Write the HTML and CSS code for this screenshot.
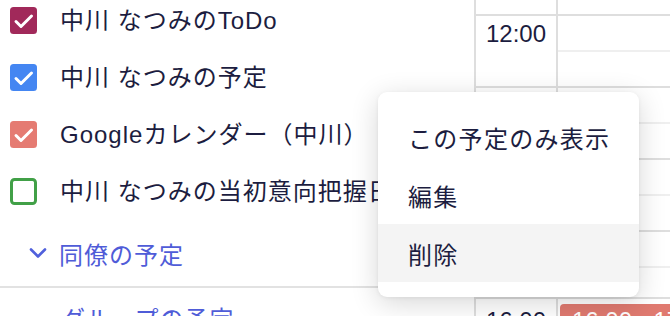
FILE: index.html
```html
<!DOCTYPE html>
<html lang="ja">
<head>
<meta charset="utf-8">
<title>カレンダー</title>
<link rel="stylesheet" href="styles.css">
</head>
<body>
<div class="app">
  <aside class="sidebar">
    <ul class="cal-list">
      <li class="cal-item">
        <span class="cb cb-todo"><svg viewBox="0 0 27 27" width="27" height="27"><rect x="0" y="0" width="27" height="27" rx="3.5" fill="#a1295a"/><polyline points="6,14.5 11,19.5 21.5,9" fill="none" stroke="#fff" stroke-width="3" stroke-linecap="round" stroke-linejoin="round"/></svg></span>
        <span class="label">中川 なつみのToDo</span>
      </li>
      <li class="cal-item">
        <span class="cb"><svg viewBox="0 0 27 27" width="27" height="27"><rect x="0" y="0" width="27" height="27" rx="3.5" fill="#4486f2"/><polyline points="6,14.5 11,19.5 21.5,9" fill="none" stroke="#fff" stroke-width="3" stroke-linecap="round" stroke-linejoin="round"/></svg></span>
        <span class="label">中川 なつみの予定</span>
      </li>
      <li class="cal-item">
        <span class="cb"><svg viewBox="0 0 27 27" width="27" height="27"><rect x="0" y="0" width="27" height="27" rx="3.5" fill="#e57b72"/><polyline points="6,14.5 11,19.5 21.5,9" fill="none" stroke="#fff" stroke-width="3" stroke-linecap="round" stroke-linejoin="round"/></svg></span>
        <span class="label">Googleカレンダー（中川）</span>
      </li>
      <li class="cal-item">
        <span class="cb"><svg viewBox="0 0 27 27" width="27" height="27"><rect x="1.5" y="1.5" width="24" height="24" rx="3" fill="#fff" stroke="#41a047" stroke-width="3"/></svg></span>
        <span class="label">中川 なつみの当初意向把握日</span>
      </li>
    </ul>
    <div class="group-toggle">
      <svg class="chev" viewBox="0 0 18 12" width="18" height="12"><polyline points="2,2.5 9,9.5 16,2.5" fill="none" stroke="#5060dc" stroke-width="2.6" stroke-linecap="round" stroke-linejoin="round"/></svg>
      <span>同僚の予定</span>
    </div>
    <div class="group-sec">
      <span class="group-link">グループの予定</span>
    </div>
  </aside>

  <main class="timeline">
    <section class="tl-top">
      <div class="time-col">
        <div class="t-head"></div>
        <div class="t-hour">12:00</div>
        <div class="t-hour"></div>
        <div class="t-hour"></div>
        <div class="t-rest"></div>
      </div>
      <div class="grid-col">
        <div class="g-head"></div>
        <div class="slot half"></div>
        <div class="slot"></div>
        <div class="slot half"></div>
        <div class="slot"></div>
        <div class="slot half"></div>
        <div class="slot"></div>
        <div class="slot half"></div>
        <div class="slot-rest"></div>
      </div>
    </section>
    <section class="tl-bottom">
      <div class="time-col">
        <div class="t-hour">16:00</div>
      </div>
      <div class="grid-col">
        <div class="event">16:00 - 17:00</div>
      </div>
    </section>
  </main>

  <div class="menu">
    <div class="menu-item">この予定のみ表示</div>
    <div class="menu-item">編集</div>
    <div class="menu-item active">削除</div>
  </div>
</div>
</body>
</html>
```

FILE: styles.css
```css
* { box-sizing: border-box; }
html, body {
  margin: 0;
  padding: 0;
  background: #fff;
}
body {
  font-family: "Liberation Sans", "Noto Sans CJK JP", sans-serif;
  font-size: 24px;
  color: #1c1d40;
  overflow: hidden;
}
.app {
  position: relative;
  display: flex;
  width: 670px;
  height: 316px;
  overflow: hidden;
}
.sidebar {
  width: 476px;
  flex: none;
  border-right: 2px solid #dedede;
  display: flex;
  flex-direction: column;
}
.sidebar > * { flex: none; }
.cal-list {
  list-style: none;
  margin: -8px 0 0 0;
  padding: 0;
}
.cal-item {
  height: 57px;
  display: flex;
  align-items: center;
  padding-left: 10px;
  gap: 23px;
  white-space: nowrap;
}
.cb {
  width: 27px;
  height: 27px;
  flex: none;
  display: block;
}
.cb svg { display: block; }
.label {
  line-height: 1;
  letter-spacing: 1px;
}
.group-toggle {
  height: 66px;
  display: flex;
  align-items: center;
  padding-left: 29px;
  gap: 12px;
  color: #4f5cd8;
  letter-spacing: 1px;
}
.chev { display: block; flex: none; }
.group-sec {
  border-top: 2px solid #e2e2e2;
  padding: 18px 0 0 61px;
  color: #4f5cd8;
  line-height: 1.2;
  letter-spacing: 1px;
}
.timeline {
  flex: 1;
  display: flex;
  flex-direction: column;
}
.tl-top {
  height: 297px;
  display: flex;
  flex: none;
}
.time-col {
  width: 82px;
  flex: none;
  border-right: 2px solid #dedede;
  display: flex;
  flex-direction: column;
}
.t-head {
  height: 16px;
  flex: none;
  border-bottom: 2px solid #dedede;
}
.t-hour {
  height: 72px;
  flex: none;
  border-bottom: 2px solid #dedede;
  padding: 4px 0 0 10px;
  line-height: 1.2;
  font-size: 24px;
}
.t-rest { flex: 1; }
.grid-col {
  flex: 1;
  display: flex;
  flex-direction: column;
}
.g-head {
  height: 16px;
  flex: none;
  border-bottom: 2px solid #dedede;
}
.slot {
  height: 36px;
  flex: none;
  border-bottom: 2px solid #dedede;
}
.slot.half { border-bottom-color: #efefef; }
.slot-rest { flex: 1; }
.tl-bottom {
  flex: 1;
  display: flex;
  border-top: 2px solid #dedede;
}
.tl-bottom .t-hour {
  border-bottom: none;
  padding-top: 8px;
}
.event {
  flex: none;
  margin: 5px 0 0 2px;
  height: 60px;
  background: #e07a70;
  border-radius: 4px;
  color: #fff;
  padding: 3px 0 0 12px;
  line-height: 1.2;
  white-space: nowrap;
}
.menu {
  position: absolute;
  left: 378px;
  top: 92px;
  width: 261px;
  height: 205px;
  background: #fff;
  border-radius: 9px;
  box-shadow: 0 6px 28px rgba(0, 0, 0, 0.16), 0 1px 4px rgba(0, 0, 0, 0.06);
  padding: 16px 0 15px;
  display: flex;
  flex-direction: column;
}
.menu-item {
  height: 58px;
  flex: none;
  display: flex;
  align-items: center;
  padding-left: 30px;
  font-size: 24px;
  letter-spacing: 1.3px;
  white-space: nowrap;
}
.menu-item.active { background: #f4f4f4; }
```
